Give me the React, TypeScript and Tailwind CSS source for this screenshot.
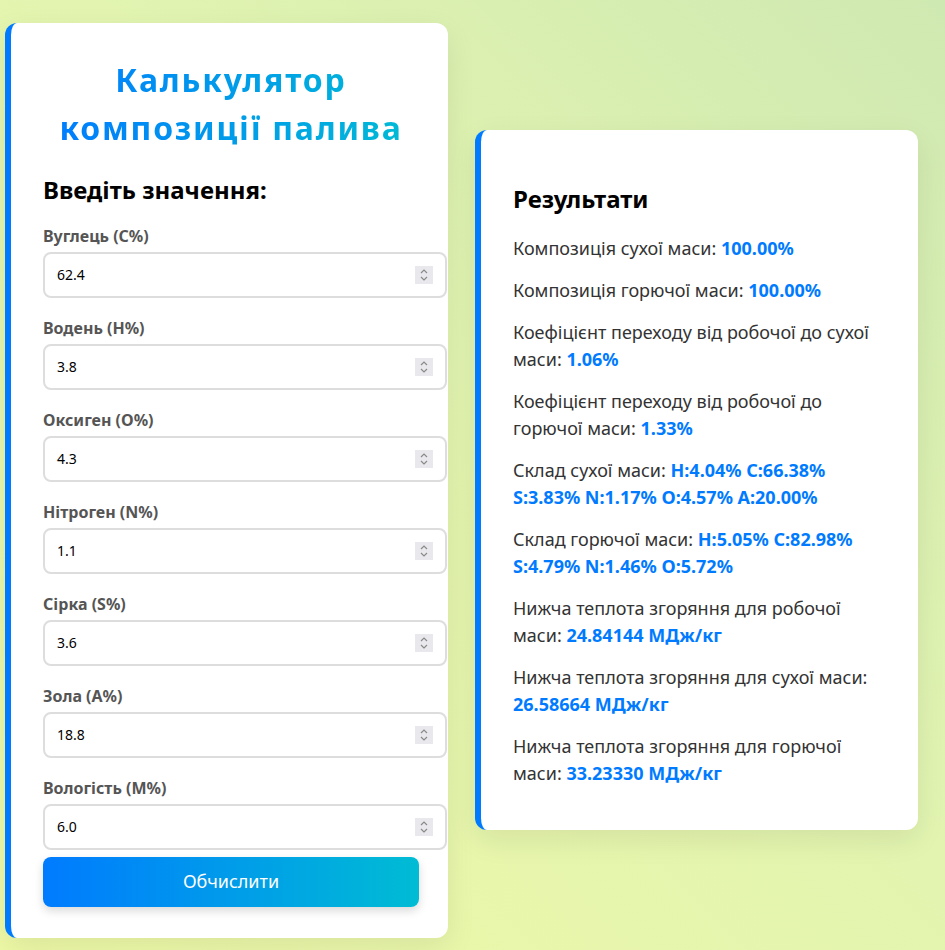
import React from "react";

const fields: { label: string; value: string }[] = [
  { label: "Вуглець (C%)", value: "62.4" },
  { label: "Водень (H%)", value: "3.8" },
  { label: "Оксиген (O%)", value: "4.3" },
  { label: "Нітроген (N%)", value: "1.1" },
  { label: "Сірка (S%)", value: "3.6" },
  { label: "Зола (A%)", value: "18.8" },
  { label: "Вологість (M%)", value: "6.0" },
];

const results: { text: string; value: string }[] = [
  { text: "Композиція сухої маси:", value: "100.00%" },
  { text: "Композиція горючої маси:", value: "100.00%" },
  { text: "Коефіцієнт переходу від робочої до сухої маси:", value: "1.06%" },
  { text: "Коефіцієнт переходу від робочої до горючої маси:", value: "1.33%" },
  { text: "Склад сухої маси:", value: "H:4.04% C:66.38% S:3.83% N:1.17% O:4.57% A:20.00%" },
  { text: "Склад горючої маси:", value: "H:5.05% C:82.98% S:4.79% N:1.46% O:5.72%" },
  { text: "Нижча теплота згоряння для робочої маси:", value: "24.84144 МДж/кг" },
  { text: "Нижча теплота згоряння для сухої маси:", value: "26.58664 МДж/кг" },
  { text: "Нижча теплота згоряння для горючої маси:", value: "33.23330 МДж/кг" },
];

function Spinner() {
  return (
    <span className="flex h-[18px] w-[18px] flex-col items-center justify-center bg-[#e9e9ed]">
      <svg width="10" height="14" viewBox="0 0 10 14" fill="none" stroke="#8a8a8a" strokeWidth="1.2">
        <path d="M2 5 L5 2 L8 5" />
        <path d="M2 9 L5 12 L8 9" />
      </svg>
    </span>
  );
}

export default function App() {
  return (
    <div
      className="flex h-[950px] w-full items-center gap-[27px] pl-[5px] pt-[10px] bg-[linear-gradient(45deg,#eef9a6_0%,#e2f4b0_55%,#cfe9b2_100%)]"
      style={{ fontFamily: '"Noto Sans", "Open Sans", sans-serif' }}
    >
      <div className="w-[443px] shrink-0 rounded-xl border-l-[6px] border-[#007bff] bg-white pb-[31px] pl-[32px] pr-[29px] pt-[33px] shadow-[0_10px_30px_rgba(0,0,0,0.08)]">
        <h1 className="bg-[linear-gradient(90deg,#007bff,#00bcd4)] bg-clip-text text-center text-[32px] font-bold leading-[48px] tracking-[1.8px] text-transparent">
          Калькулятор композиції палива
        </h1>
        <h2 className="mt-[20px] text-[24px] font-bold leading-[36px] text-black">Введіть значення:</h2>
        <div className="mt-[16px] flex flex-col gap-[18px]">
          {fields.map((f) => (
            <div key={f.label} className="flex flex-col gap-[4px]">
              <label className="text-[16px] font-bold leading-[24px] text-[#555]">{f.label}</label>
              <div className="flex h-[46px] w-[404px] items-center justify-between rounded-lg border-2 border-[#ddd] bg-white pl-[12px] pr-[12px]">
                <span className="text-[14px] text-black">{f.value}</span>
                <Spinner />
              </div>
            </div>
          ))}
        </div>
        <button className="mt-[7px] flex h-[50px] w-full items-center justify-center rounded-lg bg-[linear-gradient(90deg,#007bff,#00bcd4)] text-[18px] text-white shadow-[0_4px_10px_rgba(0,0,0,0.15)]">
          Обчислити
        </button>
      </div>

      <div className="w-[443px] shrink-0 rounded-xl border-l-[6px] border-[#007bff] bg-white pb-[43px] pl-[32px] pr-[29px] pt-[51px] shadow-[0_10px_30px_rgba(0,0,0,0.08)]">
        <h2 className="mb-[18px] text-[24px] font-bold leading-[36px] text-black">Результати</h2>
        <div className="flex flex-col gap-[15px]">
          {results.map((r) => (
            <p key={r.text} className="text-[18px] leading-[27px] text-[#333]">
              {r.text} <span className="font-bold text-[#007bff]">{r.value}</span>
            </p>
          ))}
        </div>
      </div>
    </div>
  );
}
